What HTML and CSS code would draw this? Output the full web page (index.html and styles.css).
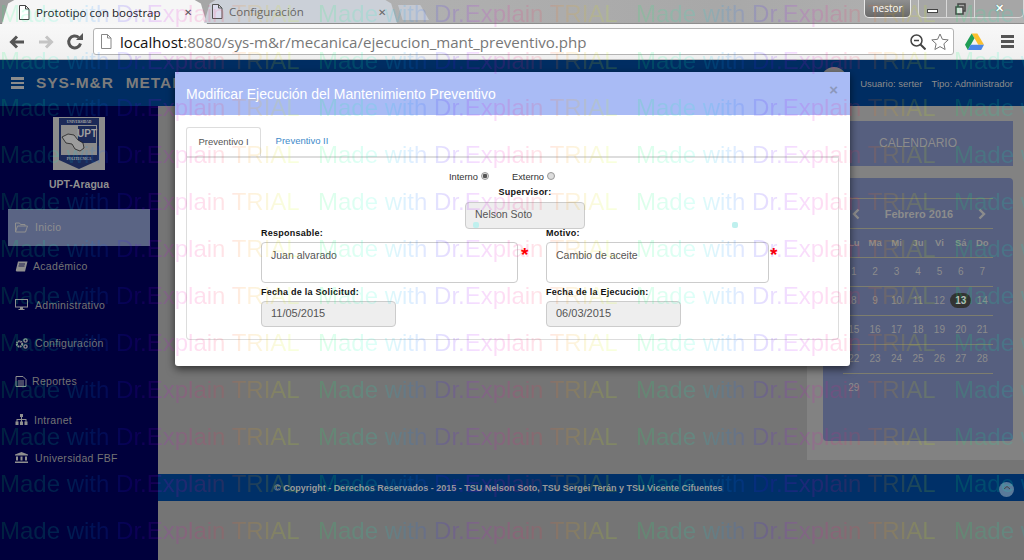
FILE: index.html
```html
<!DOCTYPE html>
<html lang="es">
<head>
<meta charset="utf-8">
<title>Prototipo con boostrap</title>
<link rel="stylesheet" href="styles.css">
</head>
<body>
<div class="screen">
  <header class="chrome">
    <div class="tabstrip">
      <div class="tab tab-active">
        <svg class="tab-doc" viewBox="0 0 12 15"><path d="M1.5.5h6l3.500 3.500v10.500h-9.500zM7.500.5v3.500h3.500" fill="#fff" stroke="#444"/></svg>
        <span class="tab-title">Prototipo con boostrap</span>
        <span class="tab-x">✕</span>
      </div>
      <div class="tab tab-idle">
        <svg class="tab-doc" viewBox="0 0 12 15"><path d="M1.500.5h6l3.500 3.500v10.500h-9.500zM7.500.5v3.500h3.500" fill="#dde" stroke="#555"/></svg>
        <span class="tab-title">Configuración</span>
        <span class="tab-x">✕</span>
      </div>
      <div class="tab-new"></div>
      <div class="winctl">
        <div class="win-user">nestor</div>
        <div class="win-buttons">
          <span class="win-btn"><i class="win-min"></i></span>
          <span class="win-btn"><svg class="win-max" viewBox="0 0 11 12"><path d="M3 1h7v7H3z" fill="none" stroke="#444" stroke-width="1.500"/><path d="M1 4h7v7H1z" fill="#ddd" stroke="#444" stroke-width="1.500"/></svg></span>
          <span class="win-btn win-close">✕</span>
        </div>
      </div>
    </div>
    <div class="toolbar">
      <svg class="nav-ico" viewBox="0 0 18 18"><path d="M16 9H4M9 3.500 3.500 9 9 14.500" fill="none" stroke="#555" stroke-width="3"/></svg>
      <svg class="nav-ico" viewBox="0 0 18 18"><path d="M2 9h12M9 3.500 14.500 9 9 14.500" fill="none" stroke="#c4c4c4" stroke-width="3"/></svg>
      <svg class="nav-ico" viewBox="0 0 18 18"><path d="M14.500 10.500A6 6 0 1 1 12.800 4.500" fill="none" stroke="#555" stroke-width="3"/><path d="M10 7h7V0z" fill="#555"/></svg>
      <div class="omnibox">
        <svg class="omni-doc" viewBox="0 0 12 15"><path d="M1.500.5h6l3.500 3.500v10.500h-9.500zM7.500.5v3.500h3.500" fill="#fff" stroke="#888"/></svg>
        <span class="url"><b>localhost</b>:8080/sys-m&amp;r/mecanica/ejecucion_mant_preventivo.php</span>
        <svg class="omni-zoom" viewBox="0 0 16 16"><circle cx="6.500" cy="6.500" r="5.500" fill="none" stroke="#444" stroke-width="1.500"/><path d="M4 6.500h5" stroke="#444" stroke-width="1.500"/><path d="m10.500 10.500 5 5" stroke="#444" stroke-width="2"/></svg>
        <svg class="omni-star" viewBox="0 0 18 18"><path d="m9 1 2.400 5.300 5.800.6-4.300 3.900 1.200 5.700L9 13.600l-5.100 2.900 1.200-5.700L.8 6.900l5.800-.6z" fill="#fff" stroke="#777"/></svg>
      </div>
      <svg class="drive" viewBox="0 0 20 18"><path d="M7 0h6l7 12h-6z" fill="#fbc02d"/><path d="M7 0 0 12l3 5.500L10 5z" fill="#1f9d55"/><path d="M3 17.500h14l3-5.500H6z" fill="#4a86e8"/></svg>
      <div class="menu-ico"><i></i><i></i><i></i></div>
    </div>
  </header>

  <div class="page">
    <div class="navbar">
      <div class="burger"><i></i><i></i><i></i></div>
      <span class="brand">SYS-M&amp;R</span>
      <span class="brand brand-second">METAL</span>
      <span class="avatar"></span>
      <span class="userinfo">Usuario: serter</span>
      <span class="userinfo">Tipo: Administrador</span>
    </div>
    <div class="page-body">
      <aside class="sidebar">
        <svg class="logo" viewBox="0 0 52 53">
          <rect width="52" height="53" fill="#8c8c8c"/>
          <path d="M6 1h40v42l-20 9-20-9z" fill="#1c2a58"/>
          <path d="M8 8h36v30H8z" fill="#8c8c8c"/>
          <text x="26" y="5.800" class="logo-small">UNIVERSIDAD</text>
          <path d="M25 9h18v17H25z" fill="#1c2a58"/>
          <text x="34" y="20" class="logo-upt">UPT</text>
          <path d="M9 20l6-3 6 1 4 5 5 3 1 5-4 3-5-2-3-5-6-1z" fill="#9c9c9c" stroke="#111" stroke-width=".7"/>
          <text x="26" y="42.500" class="logo-small">POLITECNICA</text>
        </svg>
        <div class="school">UPT-Aragua</div>
        <nav class="side-nav">
          <a class="side-item is-active">
            <svg class="side-ico" viewBox="0 0 13 11"><path d="M.5 10V1h4l1 1.500h4.500V4M.5 10l2-6h10l-2 6z" fill="none" stroke="#8f8f8f"/></svg>
            <span>Inicio</span>
          </a>
          <a class="side-item">
            <svg class="side-ico" viewBox="0 0 13 11"><path d="M3 .5h9.500L10 10.500H1.500a1.500 1.500 0 0 1-.5-2z" fill="#8f8f8f"/><path d="M4 3h6M3.500 5h6" stroke="#00003c" stroke-width=".8"/></svg>
            <span class="lab-aca">Académico</span>
          </a>
          <a class="side-item">
            <svg class="side-ico" viewBox="0 0 13 11"><path d="M0 0h13v8.500H8v1.500h1.500v1h-6v-1H5V8.500H0zM1 1v6.500h11V1z" fill="#8f8f8f"/></svg>
            <span>Administrativo</span>
          </a>
          <a class="side-item">
            <svg class="side-ico" viewBox="0 0 13 11"><circle cx="4.500" cy="6" r="2.700" fill="none" stroke="#8f8f8f" stroke-width="2" stroke-dasharray="1.600 .6"/><circle cx="10.500" cy="2.500" r="1.600" fill="none" stroke="#8f8f8f" stroke-width="1.400"/><circle cx="10.500" cy="8.500" r="1.600" fill="none" stroke="#8f8f8f" stroke-width="1.400"/></svg>
            <span>Configuración</span>
          </a>
          <a class="side-item">
            <svg class="side-ico" viewBox="0 0 13 11"><path d="M1 .5h7l3 3V10.500H1zM3 5h6M3 7h6M3 9h6" fill="none" stroke="#8f8f8f"/></svg>
            <span class="lab-rep">Reportes</span>
          </a>
          <a class="side-item">
            <svg class="side-ico" viewBox="0 0 13 11"><path d="M5 0h3v3H7v2h4.500v2.500h1V11h-3V7.500h1V6H7v1.500h1V11H5V7.500h1V6H2.500v1.500h1V11h-3V7.500h1V5H6V3H5z" fill="#8f8f8f"/></svg>
            <span class="lab-int">Intranet</span>
          </a>
          <a class="side-item">
            <svg class="side-ico" viewBox="0 0 13 11"><path d="M6.500 0 13 2.500V3.500H0V2.500zM1 4.500h2v4H1zM5.500 4.500h2v4h-2zM10 4.500h2v4h-2zM0 9.500h13V11H0z" fill="#8f8f8f"/></svg>
            <span>Universidad FBF</span>
          </a>
        </nav>
      </aside>
      <main class="content">
        <div class="content-top">
          <section class="side-column">
            <div class="cal-title">CALENDARIO</div>
            <div class="cal-card">
              <div class="cal-head">
                <svg class="cal-arrow" viewBox="0 0 8 12"><path d="M6.500 1.500 2 6l4.500 4.500" fill="none" stroke="#8c8c8c" stroke-width="2.400"/></svg>
                <span class="cal-month">Febrero 2016</span>
                <svg class="cal-arrow" viewBox="0 0 8 12"><path d="M1.500 1.500 6 6l-4.500 4.500" fill="none" stroke="#8c8c8c" stroke-width="2.400"/></svg>
              </div>
              <div class="cal-row cal-dow"><span>Lu</span><span>Ma</span><span>Mi</span><span>Ju</span><span>Vi</span><span>Sá</span><span>Do</span></div>
              <div class="cal-row"><span>1</span><span>2</span><span>3</span><span>4</span><span>5</span><span>6</span><span>7</span></div>
              <div class="cal-row"><span>8</span><span>9</span><span>10</span><span>11</span><span>12</span><span class="cal-today">13</span><span>14</span></div>
              <div class="cal-row"><span>15</span><span>16</span><span>17</span><span>18</span><span>19</span><span>20</span><span>21</span></div>
              <div class="cal-row"><span>22</span><span>23</span><span>24</span><span>25</span><span>26</span><span>27</span><span>28</span></div>
              <div class="cal-row"><span>29</span></div>
            </div>
          </section>
        </div>
        <footer class="footer">
          <span class="copy">© Copyright - Derechos Reservados - 2015 - TSU Nelson Soto, TSU Sergei Terán y TSU Vicente Cifuentes</span>
          <span class="to-top"><svg viewBox="0 0 8 5"><path d="M1 4 4 1.500 7 4" fill="none" stroke="#444" stroke-width="1"/></svg></span>
        </footer>
      </main>
    </div>
  </div>

  <div class="modal">
    <div class="modal-head">
      <h4 class="modal-title">Modificar Ejecución del Mantenimiento Preventivo</h4>
      <span class="modal-close">×</span>
    </div>
    <div class="modal-body">
      <div class="m-tabs">
        <span class="m-tab m-tab-on">Preventivo I</span>
        <span class="m-tab">Preventivo II</span>
      </div>
      <div class="m-panel">
        <div class="radios">
          <span class="radio-label">Interno</span><i class="radio radio-on"></i>
          <span class="radio-label radio-second">Externo</span><i class="radio"></i>
        </div>
        <div class="supervisor">
          <label class="f-label">Supervisor:</label>
          <input class="f-input f-super" value="Nelson Soto" disabled>
        </div>
        <div class="form-grid">
          <div class="f-col">
            <label class="f-label">Responsable:</label>
            <div class="req-row">
              <textarea class="f-area f-area-a" rows="2" readonly>Juan alvarado</textarea>
              <span class="req">*</span>
            </div>
            <label class="f-label f-label-date">Fecha de la Solicitud:</label>
            <input class="f-input f-date" value="11/05/2015" disabled>
          </div>
          <div class="f-col">
            <label class="f-label">Motivo:</label>
            <div class="req-row">
              <textarea class="f-area f-area-b" rows="2" readonly>Cambio de aceite</textarea>
              <span class="req req-b">*</span>
            </div>
            <label class="f-label f-label-date">Fecha de la Ejecucion:</label>
            <input class="f-input f-date" value="06/03/2015" disabled>
          </div>
        </div>
      </div>
    </div>
    <i class="dot dot-a"></i>
    <i class="dot dot-b"></i>
  </div>

  <div class="watermark" aria-hidden="true">
    <span>Made with Dr.Explain TRIAL</span><span>Made with Dr.Explain TRIAL</span><span>Made with Dr.Explain TRIAL</span><span>Made with Dr.Explain TRIAL</span>
    <span>Made with Dr.Explain TRIAL</span><span>Made with Dr.Explain TRIAL</span><span>Made with Dr.Explain TRIAL</span><span>Made with Dr.Explain TRIAL</span>
    <span>Made with Dr.Explain TRIAL</span><span>Made with Dr.Explain TRIAL</span><span>Made with Dr.Explain TRIAL</span><span>Made with Dr.Explain TRIAL</span>
    <span>Made with Dr.Explain TRIAL</span><span>Made with Dr.Explain TRIAL</span><span>Made with Dr.Explain TRIAL</span><span>Made with Dr.Explain TRIAL</span>
    <span>Made with Dr.Explain TRIAL</span><span>Made with Dr.Explain TRIAL</span><span>Made with Dr.Explain TRIAL</span><span>Made with Dr.Explain TRIAL</span>
    <span>Made with Dr.Explain TRIAL</span><span>Made with Dr.Explain TRIAL</span><span>Made with Dr.Explain TRIAL</span><span>Made with Dr.Explain TRIAL</span>
    <span>Made with Dr.Explain TRIAL</span><span>Made with Dr.Explain TRIAL</span><span>Made with Dr.Explain TRIAL</span><span>Made with Dr.Explain TRIAL</span>
    <span>Made with Dr.Explain TRIAL</span><span>Made with Dr.Explain TRIAL</span><span>Made with Dr.Explain TRIAL</span><span>Made with Dr.Explain TRIAL</span>
    <span>Made with Dr.Explain TRIAL</span><span>Made with Dr.Explain TRIAL</span><span>Made with Dr.Explain TRIAL</span><span>Made with Dr.Explain TRIAL</span>
    <span>Made with Dr.Explain TRIAL</span><span>Made with Dr.Explain TRIAL</span><span>Made with Dr.Explain TRIAL</span><span>Made with Dr.Explain TRIAL</span>
    <span>Made with Dr.Explain TRIAL</span><span>Made with Dr.Explain TRIAL</span><span>Made with Dr.Explain TRIAL</span><span>Made with Dr.Explain TRIAL</span>
    <span>Made with Dr.Explain TRIAL</span><span>Made with Dr.Explain TRIAL</span><span>Made with Dr.Explain TRIAL</span><span>Made with Dr.Explain TRIAL</span>
  </div>
</div>
</body>
</html>
```
FILE: styles.css
```css
* { box-sizing: border-box; }
html, body { margin: 0; padding: 0; }
body { font-family: "Liberation Sans", Arial, sans-serif; background: #757575; }
i { display: block; font-style: normal; }

.screen { position: relative; width: 1024px; height: 560px; overflow: hidden; display: flex; flex-direction: column; }

/* Browser chrome */
.chrome { height: 60px; flex: none; display: flex; flex-direction: column; }
.tabstrip { height: 24px; display: flex; align-items: flex-end; background: linear-gradient(90deg, #9c9c9c, #b0b0b0 40%, #a8a8a8 70%, #b4b4b4); padding-left: 2px; border-bottom: 1px solid #8e8e8e; }
.tab { height: 23px; display: flex; align-items: center; font-family: "Open Sans", sans-serif; font-size: 11.500px; clip-path: polygon(0 100%, 3% 15%, 6% 0, 94% 0, 97% 15%, 100% 100%); }
.tab-active { width: 205px; background: #f6f6f6; padding-left: 16px; color: #222; margin-bottom: -1px; height: 24px; }
.tab-idle { width: 193px; margin-left: -3px; background: #cbd0d8; padding-left: 7px; color: #666; }
.tab-doc { width: 12px; height: 15px; margin: 0 6px 0 0; flex: none; }
.tab-title { flex: 1; }
.tab-active .tab-x { font-size: 10px; color: #555; margin-right: 15px; }
.tab-idle .tab-x { font-size: 10px; color: #666; margin-right: 11px; }
.tab-new { width: 31px; height: 15px; margin: 0 0 3px 1px; background: #c4c8d0; clip-path: polygon(0 0, 72% 0, 100% 100%, 15% 100%); }
.winctl { margin-left: auto; align-self: flex-start; display: flex; gap: 7px; }
.win-user { width: 47px; height: 18px; border: 1px solid #e8e8e8; border-top: 0; border-radius: 0 0 5px 5px; background: linear-gradient(#8f8f8f, #6a6a6a); color: #fff; font-family: "Open Sans", sans-serif; font-size: 10px; line-height: 17px; text-align: center; }
.win-buttons { width: 106px; height: 18px; display: flex; border: 1px solid #d8d8d8; border-top: 0; border-radius: 0 0 5px 5px; background: #a6a6a6; }
.win-btn { width: 28px; flex: none; display: flex; align-items: center; justify-content: center; border-right: 1px solid #d8d8d8; color: #fff; font-size: 11px; font-weight: 700; }
.win-close { flex: 1; width: auto; border-right: 0; text-shadow: 0 0 1px #333; }
.win-min { width: 11px; height: 4px; border: 1px solid #444; background: #fff; margin-top: 4px; }
.win-max { width: 11px; height: 12px; }

.toolbar { height: 36px; display: flex; align-items: center; background: linear-gradient(#f8f8f8, #f0f0f0); padding: 0 8px; border-bottom: 1px solid #bdbdbd; }
.nav-ico { width: 18px; height: 18px; flex: none; margin-right: 11px; }
.omnibox { width: 861px; height: 27px; margin: 0 0 0 -2px; display: flex; align-items: center; background: #fff; border: 1px solid #b4b4b4; border-radius: 3px; padding-left: 6px; }
.omni-doc { width: 12px; height: 15px; margin-right: 8px; flex: none; }
.url { flex: 1; font-family: "Open Sans", sans-serif; font-size: 15.100px; color: #777; white-space: nowrap; }
.url b { font-weight: 400; color: #111; }
.omni-zoom { width: 16px; height: 16px; margin-right: 5px; }
.omni-star { width: 18px; height: 18px; margin-right: 4px; }
.drive { width: 19px; height: 18px; margin-left: 11px; flex: none; }
.menu-ico { width: 13px; margin-left: 17px; display: flex; flex-direction: column; gap: 2px; }
.menu-ico i { height: 3px; background: #555; }

/* Page */
.page { flex: 1; display: flex; flex-direction: column; min-height: 0; }
.navbar { height: 46px; flex: none; background: #002d62; display: flex; align-items: center; padding: 0 11px; color: #8c8c8c; }
.burger { width: 13px; display: flex; flex-direction: column; gap: 2px; margin-right: 12px; }
.burger i { height: 2.500px; background: #8c8c8c; }
.brand { font-size: 15.500px; font-weight: 700; letter-spacing: .9px; color: #7c7c7c; }
.brand-second { margin-left: 12px; }
.avatar { width: 26px; height: 26px; border-radius: 50%; background: #777; margin: -6px 0 0 auto; }
.userinfo { font-size: 9.500px; margin-left: 9px; white-space: nowrap; }
.avatar + .userinfo { margin-left: 13px; }

.page-body { flex: 1; display: flex; min-height: 0; }
.sidebar { width: 158px; flex: none; background: #00003c; display: flex; flex-direction: column; align-items: center; padding-top: 11px; }
.logo { width: 52px; height: 53px; display: block; flex: none; }
.logo-small { font-size: 3.500px; font-weight: 700; text-anchor: middle; fill: #aaa; font-family: "Liberation Serif", serif; }
.logo-upt { font-size: 10px; font-weight: 700; text-anchor: middle; fill: #a0a0a0; }
.school { margin-top: 8px; font-size: 10.500px; line-height: 12px; font-weight: 700; color: #8f8f8f; }
.side-nav { width: 142px; margin: 19px 0 0 0; display: flex; flex-direction: column; }
.side-item { height: 38.300px; display: flex; align-items: center; padding-left: 7px; font-size: 10.500px; letter-spacing: .3px; color: #747474; gap: 7px; }
.side-item.is-active { height: 37px; background: #5a6484; margin-bottom: 1.300px; color: #8f8f8f; padding-bottom: 1px; }
.side-ico { width: 13px; height: 11px; flex: none; }
.lab-aca { margin-left: -2px; }
.lab-rep { margin-left: -3px; }
.lab-int { margin-left: -1px; }

.content { flex: 1; display: flex; flex-direction: column; min-width: 0; background: #757575; }
.content-top { height: 368px; flex: none; display: flex; justify-content: flex-end; }
.side-column { width: 217px; height: 354px; background: #828282; padding: 15px 11px 0 16px; }
.cal-title { height: 45px; background: #565f7f; text-align: center; line-height: 44px; font-size: 12px; color: #8c8c8c; }
.cal-card { height: 263px; margin-top: 12px; background: #565f7f; border-radius: 4px; padding: 20px 20px 0; color: #8c8c8c; }
.cal-head { height: 30px; display: flex; align-items: center; justify-content: space-between; border-top: 1px solid #7d7d6e; padding: 0 7px 0 9px; }
.cal-month { font-size: 11px; font-weight: 700; }
.cal-arrow { width: 8px; height: 12px; flex: none; }
.cal-row { height: 29px; display: grid; grid-template-columns: repeat(7, 1fr); align-items: center; justify-items: center; border-top: 1px solid #7d7d6e; font-size: 10px; padding-bottom: 2px; }
.cal-dow { font-weight: 700; font-size: 9.500px; }
.cal-today { width: 21px; height: 15px; line-height: 15px; border-radius: 8px; background: #333; color: #bbb; text-align: center; font-weight: 700; }

.footer { height: 27px; flex: none; background: #003068; display: flex; align-items: center; padding: 0 10px 0 116px; }
.copy { font-size: 9px; font-weight: 700; color: #9a9a9a; white-space: nowrap; }
.to-top { width: 15px; height: 15px; margin: 3px 0 0 auto; border-radius: 50%; background: #5a7a9a; display: flex; align-items: center; justify-content: center; }
.to-top svg { width: 8px; height: 5px; margin-top: -3px; }

/* Modal */
.modal { position: absolute; left: 175px; top: 72px; width: 675px; height: 294px; background: #fff; box-shadow: 0 3px 8px rgba(0, 0, 0, .6); border-radius: 0 0 3px 3px; }
.modal-head { height: 43px; background: #a9bbf5; display: flex; align-items: center; padding: 0 12px 0 11px; }
.modal-title { flex: 1; margin: 0; font-size: 14px; font-weight: 400; color: #fff; }
.modal-close { font-size: 15px; font-weight: 700; color: #8c98bb; margin-top: -8px; }
.modal-body { padding: 12px 11px 0; }
.m-tabs { display: flex; height: 29px; }
.m-tab { width: 75px; padding-top: 8px; font-size: 9.500px; color: #428bca; text-align: center; }
.m-tab-on { border: 1px solid #ddd; border-bottom: 0; border-radius: 3px 3px 0 0; background: #fff; color: #555; }
.m-tab + .m-tab { width: 82px; }
.m-panel { height: 184px; border: 1px solid #ddd; border-top: 2px solid #ddd; border-radius: 0 0 4px 4px; }
.radios { display: flex; align-items: center; height: 14px; margin: 12px 0 0 262px; font-size: 9.300px; color: #333; }
.radio-label { line-height: 14px; }
.radio-second { margin-left: 23px; }
.radio { width: 8px; height: 8px; border-radius: 50%; border: 1px solid #999; background: #ddd; margin: -3px 0 0 3px; }
.radio-on { background: radial-gradient(circle, #555 0 2px, #ddd 2.500px); }
.supervisor { width: 120px; margin: 2px 0 0 278px; display: flex; flex-direction: column; align-items: center; }
.f-label { display: block; font-size: 9px; line-height: 10px; font-weight: 700; letter-spacing: .25px; color: #111; }
.supervisor .f-label { line-height: 12px; margin-bottom: 4px; }
.f-input { display: block; font-family: "Liberation Sans", Arial, sans-serif; font-size: 10.500px; color: #555; background: #eee; border: 1px solid #ccc; border-radius: 4px; padding: 0 9px 3px; opacity: 1; }
.f-super { width: 120px; height: 27px; }
.form-grid { display: grid; grid-template-columns: 285px 1fr; padding-left: 74px; }
.f-col { display: flex; flex-direction: column; align-items: flex-start; }
.f-col > .f-label:first-child { line-height: 8px; margin-bottom: 5px; }
.req-row { display: flex; }
.f-area { display: block; height: 41px; font-family: "Liberation Sans", Arial, sans-serif; font-size: 10.500px; line-height: 14px; color: #555; background: #fff; border: 1px solid #ccc; border-radius: 4px; padding: 5px 9px; resize: none; overflow: hidden; }
.f-area-a { width: 257px; }
.f-area-b { width: 223px; }
.req { font-size: 19px; line-height: 18px; font-weight: 700; color: #f00; margin: 4px 0 0 3px; }
.req-b { margin-left: 1px; }
.f-label-date { margin: 4px 0 4px; }
.f-date { width: 135px; height: 26px; font-size: 11px; }
.dot { position: absolute; width: 6px; height: 6px; border-radius: 2px; background: #bff0ee; top: 150px; }
.dot-a { left: 298px; }
.dot-b { left: 557px; }

/* Trial watermark laid across the whole capture */
.watermark { position: absolute; left: 0; top: -10px; width: 1272px; display: grid; grid-template-columns: repeat(4, 318px); grid-auto-rows: 47px; pointer-events: none; }
.watermark span { font-size: 24px; line-height: 47px; white-space: nowrap; color: transparent; background: linear-gradient(90deg, #00ff60 0, #00ffd0 60px, #0090ff 90px, #4000ff 130px, #c000ff 160px, #ff00a0 190px, #ff3040 225px, #ff9000 245px, #d0ff00 290px); -webkit-background-clip: text; background-clip: text; opacity: .13; }
```
